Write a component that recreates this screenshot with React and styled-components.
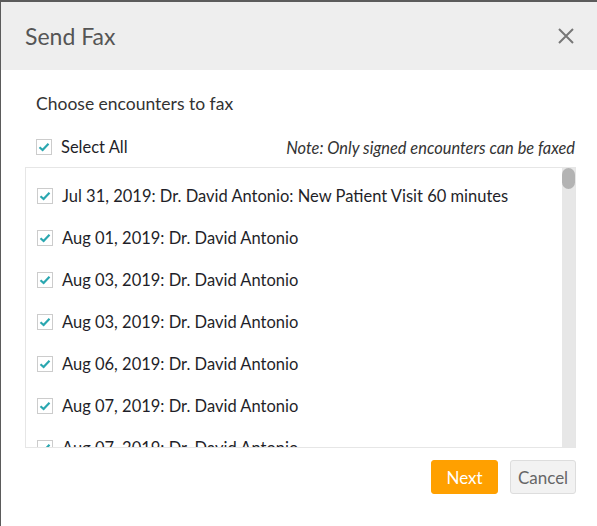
import React, { useState } from 'react';
import styled, { createGlobalStyle } from 'styled-components';

const GlobalStyle = createGlobalStyle`
  html, body {
    margin: 0;
    padding: 0;
    background: #5b5b5b;
    font-family: Lato, "Open Sans", sans-serif;
  }
`;

const Modal = styled.div`
  margin: 2px 0 0 1px;
  width: 596px;
  height: 524px;
  background: #fff;
  display: flex;
  flex-direction: column;
`;

const Header = styled.div`
  height: 68px;
  flex-shrink: 0;
  background: #eeeeee;
  display: flex;
  align-items: center;
  justify-content: space-between;
  padding: 0 23px 0 24px;
`;

const Title = styled.h2`
  margin: 0;
  font-size: 23px;
  font-weight: 400;
  color: #555;
`;

const CloseButton = styled.button`
  border: 0;
  background: none;
  padding: 0;
  width: 16px;
  height: 16px;
  display: flex;
  cursor: pointer;
`;

const Body = styled.div`
  padding: 0 21px 0 24px;
  display: flex;
  flex-direction: column;
`;

const Prompt = styled.div`
  margin-top: 24px;
  padding-left: 11px;
  font-size: 17.5px;
  line-height: 20px;
  color: #333;
`;

const SelectRow = styled.div`
  margin-top: 22px;
  height: 22px;
  display: flex;
  align-items: center;
  justify-content: space-between;
  padding: 0 1px 0 11px;
`;

const Note = styled.span`
  font-size: 16.4px;
  font-style: italic;
  color: #333;
`;

const Label = styled.label`
  display: flex;
  align-items: center;
  gap: 9px;
  font-size: 16.5px;
  color: #1f1f29;
  cursor: pointer;
  white-space: nowrap;
`;

const Box = styled.span`
  width: 14px;
  height: 14px;
  flex-shrink: 0;
  border: 1px solid #cccccc;
  background: #fff;
  display: flex;
  align-items: center;
  justify-content: center;
`;

const List = styled.div`
  margin-top: 9px;
  height: 281px;
  box-sizing: border-box;
  border: 1px solid #e6e6e6;
  display: flex;
`;

const Rows = styled.div`
  flex: 1;
  overflow: hidden;
  padding-top: 7px;
`;

const Track = styled.div`
  width: 13px;
  flex-shrink: 0;
  background: #e7e7e7;
`;

const Thumb = styled.div`
  height: 21px;
  border-radius: 7px;
  background: #b3b3b3;
`;

const Item = styled.div`
  height: 42px;
  display: flex;
  align-items: center;
  padding-left: 11px;
`;

const Footer = styled.div`
  margin-top: 12px;
  display: flex;
  justify-content: flex-end;
  gap: 12px;
`;

const Button = styled.button`
  height: 34px;
  width: ${(p) => (p.$primary ? '67px' : '66px')};
  border-radius: 3px;
  font-family: Lato, sans-serif;
  font-size: 17px;
  padding: 0;
  cursor: pointer;
  border: 1px solid ${(p) => (p.$primary ? '#ffa000' : '#dddddd')};
  background: ${(p) => (p.$primary ? '#ffa000' : '#f2f2f2')};
  color: ${(p) => (p.$primary ? '#fff' : '#666')};
`;

const Check = ({ checked }) => (
  <Box>
    {checked && (
      <svg width="12" height="10" viewBox="0 0 12 10">
        <path d="M1.5 5.2 L4.6 8 L10.5 1.8" fill="none" stroke="#2aa7b0" strokeWidth="2.2" />
      </svg>
    )}
  </Box>
);

const encounters = [
  'Jul 31, 2019: Dr. David Antonio: New Patient Visit 60 minutes',
  'Aug 01, 2019: Dr. David Antonio',
  'Aug 03, 2019: Dr. David Antonio',
  'Aug 03, 2019: Dr. David Antonio',
  'Aug 06, 2019: Dr. David Antonio',
  'Aug 07, 2019: Dr. David Antonio',
  'Aug 07, 2019: Dr. David Antonio',
];

export default function App() {
  const [checked, setChecked] = useState(encounters.map(() => true));
  const all = checked.every(Boolean);

  const toggle = (i) => setChecked((c) => c.map((v, j) => (j === i ? !v : v)));

  return (
    <>
      <GlobalStyle />
      <Modal>
        <Header>
          <Title>Send Fax</Title>
          <CloseButton aria-label="Close">
            <svg width="16" height="16" viewBox="0 0 16 16">
              <path d="M1 1 L15 15 M15 1 L1 15" stroke="#777" strokeWidth="2" />
            </svg>
          </CloseButton>
        </Header>
        <Body>
          <Prompt>Choose encounters to fax</Prompt>
          <SelectRow>
            <Label onClick={() => setChecked(encounters.map(() => !all))}>
              <Check checked={all} />
              Select All
            </Label>
            <Note>Note: Only signed encounters can be faxed</Note>
          </SelectRow>
          <List>
            <Rows>
              {encounters.map((e, i) => (
                <Item key={i}>
                  <Label onClick={() => toggle(i)}>
                    <Check checked={checked[i]} />
                    {e}
                  </Label>
                </Item>
              ))}
            </Rows>
            <Track>
              <Thumb />
            </Track>
          </List>
          <Footer>
            <Button $primary>Next</Button>
            <Button>Cancel</Button>
          </Footer>
        </Body>
      </Modal>
    </>
  );
}
